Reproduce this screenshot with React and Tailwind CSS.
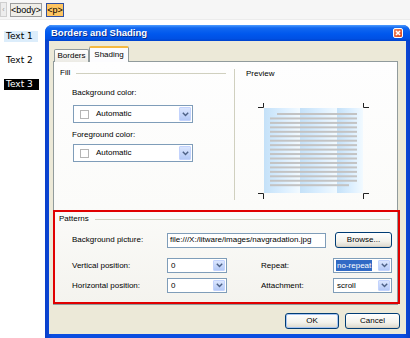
import React from 'react';

const sans = "font-[family-name:'Liberation_Sans',Arial,sans-serif]";

const Arrow = () => (
  <span className="flex h-full w-[12px] items-center justify-center rounded-[1px] border border-[#c3d3fd] bg-[linear-gradient(180deg,#dbe6fe,#b4c9f6)]">
    <svg width="7" height="5" viewBox="0 0 7 5">
      <path d="M0.8 0.8 L3.5 3.6 L6.2 0.8" stroke="#4d6185" strokeWidth="1.4" fill="none" />
    </svg>
  </span>
);

const ColorSelect = () => (
  <div className="flex h-[18px] w-[120px] items-center border border-[#7f9db9] bg-white p-[1px]">
    <span className="ml-[5px] h-[9px] w-[9px] border border-[#b5b5b5] bg-white" />
    <span className="ml-[7px] flex-1 text-[8px] leading-none text-black">Automatic</span>
    <Arrow />
  </div>
);

const Select = ({ value, width, selected }) => (
  <div className={`flex h-[15px] items-center border border-[#7f9db9] bg-white p-[1px] ${width}`}>
    <span className="flex-1 pl-[1px] text-[8px] leading-none text-black">
      {selected ? (
        <span className="bg-[#316ac5] px-[1px] py-[1px] text-white">{value}</span>
      ) : (
        <span className="pl-[1px]">{value}</span>
      )}
    </span>
    <Arrow />
  </div>
);

const Button = ({ label, width, focused }) => (
  <button
    className={`flex h-[16px] ${width} items-center justify-center rounded-[3px] border border-[#003c74] bg-[linear-gradient(180deg,#ffffff,#f3f2ec_60%,#dcd8cc)] text-[8px] leading-none text-black ${focused ? 'shadow-[inset_0_0_0_1px_#a6c4f2]' : 'shadow-[inset_0_-1px_0_#d6d0c5]'}`}
  >
    {label}
  </button>
);

const Preview = () => {
  const lines = Array.from({ length: 17 }, (_, i) => i);
  return (
    <svg width="114" height="96" viewBox="0 0 114 96" className="block">
      <defs>
        <linearGradient id="band" x1="0" x2="1" y1="0" y2="0">
          <stop offset="0" stopColor="#c4e1f8" />
          <stop offset="0.55" stopColor="#dcefff" />
          <stop offset="1" stopColor="#f2faff" />
        </linearGradient>
      </defs>
      <rect x="7" y="5" width="36" height="85" fill="url(#band)" />
      <rect x="43" y="5" width="37" height="85" fill="url(#band)" />
      <rect x="80" y="5" width="26" height="85" fill="url(#band)" />
      {lines.map((i) => (
        <rect
          key={i}
          x={i === 0 ? 20 : 13}
          y={10 + i * 4.45}
          width={i === 0 ? 80 : i === 16 ? 79 : 87}
          height="2"
          fill="#c3c3c3"
        />
      ))}
      <path d="M1 4.5 H6.5 V0" stroke="#222" strokeWidth="1" fill="none" />
      <path d="M106.5 0 V4.5 H112" stroke="#222" strokeWidth="1" fill="none" />
      <path d="M1 90.5 H6.5 V96" stroke="#222" strokeWidth="1" fill="none" />
      <path d="M106.5 96 V90.5 H112" stroke="#222" strokeWidth="1" fill="none" />
    </svg>
  );
};

export default function App() {
  return (
    <div className={`relative h-[338px] w-[410px] overflow-hidden bg-white ${sans}`}>
      {/* tag path bar */}
      <div className="flex h-[20px] items-start border-b border-[#ececec] bg-[#f6f6f6] pt-[2px]">
        <span className="flex h-[15px] w-[7px] items-center justify-center border border-[#cfcfcf] bg-[#ededed] text-[7px] leading-none text-[#9a9a9a]">
          ‹
        </span>
        <span className="ml-[3px] mt-[1px] flex h-[14px] w-[32px] items-center justify-center border border-[#9c9c9c] bg-[#efeee8] text-[9px] leading-none text-black">
          {'<body>'}
        </span>
        <span className="ml-[4px] mt-[1px] flex h-[14px] w-[18px] items-center justify-center border border-[#31509f] bg-[#ffc561] text-[9px] leading-none text-black">
          {'<p>'}
        </span>
      </div>

      <div className="flex">
        {/* document text */}
        <div className="flex w-[45px] flex-col gap-[13px] pl-[4px] pt-[11px] font-[family-name:'DejaVu_Sans',Verdana,sans-serif] text-[9px] leading-[11px]">
          <span className="h-[11px] w-[34px] bg-[#dcedfb] px-[2px] text-black">Text 1</span>
          <span className="h-[11px] w-[34px] px-[2px] text-black">Text 2</span>
          <span className="h-[11px] w-[35px] bg-black px-[2px] text-white">Text 3</span>
        </div>

        {/* dialog */}
        <div className="mt-[5px] flex h-[313px] w-[365px] flex-col overflow-hidden rounded-t-[7px] bg-[linear-gradient(90deg,#0a3fc9,#0b4de0_2%,#0b4de0_98%,#0a3fc9)]">
          <div className="flex h-[16px] items-center justify-between bg-[linear-gradient(180deg,#4d9cff_0%,#1268f0_18%,#0058ee_55%,#0050e4_85%,#0043cc_100%)] pl-[6px] pr-[7px]">
            <span className="text-[9.5px] font-bold leading-none text-white [text-shadow:1px_1px_0_#0a2f8f]">
              Borders and Shading
            </span>
            <span className="flex h-[10px] w-[10px] items-center justify-center rounded-[2px] border border-white bg-[linear-gradient(135deg,#f08a60,#d9441c)]">
              <svg width="6" height="6" viewBox="0 0 6 6">
                <path d="M1 1 L5 5 M5 1 L1 5" stroke="#fff" strokeWidth="1.6" />
              </svg>
            </span>
          </div>

          <div className="mx-[4px] mb-[4px] flex flex-1 flex-col bg-[#ece9d8] px-[4px] pt-[5px] text-[8px] leading-none text-black">
            {/* tabs */}
            <div className="relative z-10 -mb-[1px] flex h-[16px] items-end pl-[1px]">
              <span className="flex h-[13px] w-[35px] items-center justify-center rounded-t-[2px] border border-b-0 border-[#919b9c] bg-[linear-gradient(180deg,#ffffff,#ecebe5)]">
                Borders
              </span>
              <span className="flex h-[16px] w-[40px] items-center justify-center rounded-t-[2px] border-x border-t-2 border-x-[#919b9c] border-t-[#f5b940] bg-[#fcfcfe] pb-[1px]">
                Shading
              </span>
            </div>

            {/* panel */}
            <div className="flex h-[244px] w-[345px] flex-col border border-[#919b9c] bg-[linear-gradient(180deg,#fefefe,#fbfbf9_60%,#f4f3ee)]">
              <div className="flex h-[143px]">
                <div className="flex w-[180px] flex-col">
                  <div className="mt-[6px] flex h-[10px] items-center pl-[6px]">
                    <span>Fill</span>
                    <span className="ml-[6px] mr-[8px] mt-[1px] h-px flex-1 bg-[#d0d0bf]" />
                  </div>
                  <div className="ml-[18px] mt-[10px] flex h-[10px] items-center">Background color:</div>
                  <div className="ml-[19px] mt-[7px]">
                    <ColorSelect />
                  </div>
                  <div className="ml-[18px] mt-[7px] flex h-[10px] items-center">Foreground color:</div>
                  <div className="ml-[19px] mt-[4px]">
                    <ColorSelect />
                  </div>
                </div>
                <div className="mt-[7px] h-[131px] w-px bg-[#d0d0bf]" />
                <div className="flex flex-1 flex-col">
                  <div className="mt-[7px] flex h-[10px] items-center pl-[11px]">Preview</div>
                  <div className="mt-[24px] pl-[22px]">
                    <Preview />
                  </div>
                </div>
              </div>

              {/* patterns */}
              <div className="-ml-[1px] mt-[5px] flex h-[94px] w-[347px] flex-col border-2 border-[#e00000]">
                <div className="mt-[2px] flex h-[10px] items-center pl-[4px]">
                  <span>Patterns</span>
                  <span className="ml-[6px] mr-[8px] h-px flex-1 bg-[#d0d0bf]" />
                </div>
                <div className="mt-[8px] flex h-[16px] items-center pl-[17px]">
                  <span className="w-[95px]">Background picture:</span>
                  <div className="flex h-[15px] w-[159px] items-center border border-[#7f9db9] bg-white pl-[2px]">
                    file:///X:/litware/images/navgradation.jpg
                  </div>
                  <div className="ml-[9px]">
                    <Button label="Browse..." width="w-[57px]" />
                  </div>
                </div>
                <div className="mt-[10px] flex h-[15px] items-center pl-[17px]">
                  <span className="w-[95px]">Vertical position:</span>
                  <Select value="0" width="w-[60px]" />
                  <span className="ml-[34px] w-[72px]">Repeat:</span>
                  <Select value="no-repeat" width="w-[59px]" selected />
                </div>
                <div className="mt-[5px] flex h-[15px] items-center pl-[17px]">
                  <span className="w-[95px]">Horizontal position:</span>
                  <Select value="0" width="w-[60px]" />
                  <span className="ml-[34px] w-[72px]">Attachment:</span>
                  <Select value="scroll" width="w-[59px]" />
                </div>
              </div>
            </div>

            {/* buttons */}
            <div className="mt-[8px] flex justify-end gap-[6px] pr-[2px]">
              <Button label="OK" width="w-[54px]" focused />
              <Button label="Cancel" width="w-[55px]" />
            </div>
          </div>
        </div>
      </div>
    </div>
  );
}
